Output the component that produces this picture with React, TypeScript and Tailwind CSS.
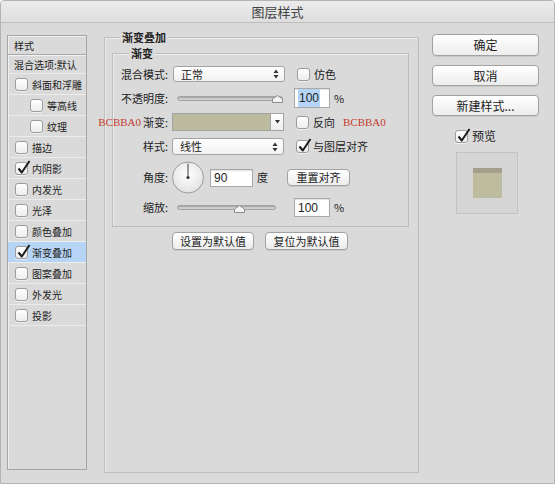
import type { ReactNode } from "react";

const cjk = { fontFamily: '"Noto Sans CJK SC", "Noto Sans", sans-serif' };
const serif = { fontFamily: '"Liberation Serif", serif' };

const layerStyles = [
  { label: "斜面和浮雕" },
  { label: "等高线", indent: true },
  { label: "纹理", indent: true },
  { label: "描边" },
  { label: "内阴影", checked: true },
  { label: "内发光" },
  { label: "光泽" },
  { label: "颜色叠加" },
  { label: "渐变叠加", checked: true, active: true },
  { label: "图案叠加" },
  { label: "外发光" },
  { label: "投影" },
];

function Checkbox({ checked = false }: { checked?: boolean }) {
  return (
    <span className="relative inline-block w-[13px] h-[13px] shrink-0 rounded-[3px] border border-[#9c9c9c] bg-gradient-to-b from-white to-[#ededed] shadow-[0_1px_0_rgba(255,255,255,0.6)]">
      {checked && (
        <svg
          className="absolute left-[1px] top-[-3px]"
          width="14"
          height="15"
          viewBox="0 0 14 15"
        >
          <path
            d="M1.5 8.5 L4.8 12.5 L12.5 1"
            fill="none"
            stroke="#1c1c1c"
            strokeWidth="2"
            strokeLinejoin="round"
          />
        </svg>
      )}
    </span>
  );
}

function UpDown() {
  return (
    <svg width="6" height="10" viewBox="0 0 6 10">
      <path d="M3 0.5 L5.5 4 H0.5 Z" fill="#333" />
      <path d="M3 9.5 L5.5 6 H0.5 Z" fill="#333" />
    </svg>
  );
}

function Select({ value, h }: { value: string; h: string }) {
  return (
    <div
      className={`w-[112px] ${h} flex items-center justify-between pl-[7px] pr-[5px] rounded-[3px] border border-[#a3a3a3] bg-gradient-to-b from-white to-[#f1f1f1] text-[11px] text-[#222]`}
    >
      <span>{value}</span>
      <UpDown />
    </div>
  );
}

function Slider({ width, thumb }: { width: string; thumb: string }) {
  return (
    <div className={`relative ${width} h-[12px] flex items-center`}>
      <div className="w-full h-[5px] rounded-full border border-[#a2a2a2] bg-[#cfcfcf] shadow-[inset_0_1px_1px_rgba(0,0,0,0.2)]" />
      <svg
        className={`absolute top-[3px] ${thumb}`}
        width="11"
        height="8"
        viewBox="0 0 11 8"
      >
        <path
          d="M5.5 0.5 L10.5 4 V7.5 H0.5 V4 Z"
          fill="#f4f4f4"
          stroke="#8c8c8c"
        />
      </svg>
    </div>
  );
}

function Field({ children, w, h }: { children: ReactNode; w: string; h: string }) {
  return (
    <div
      className={`${w} ${h} flex items-center pl-[3px] border border-[#a8a8a8] bg-white text-[12px] text-[#222] shadow-[inset_0_1px_1px_rgba(0,0,0,0.12)]`}
      style={{ fontFamily: '"Liberation Sans", Arial, sans-serif' }}
    >
      {children}
    </div>
  );
}

function PushButton({
  children,
  className = "",
}: {
  children: ReactNode;
  className?: string;
}) {
  return (
    <div
      className={`flex items-center justify-center rounded-[4px] border border-[#a2a2a2] bg-gradient-to-b from-white to-[#ececec] text-[11px] text-[#222] shadow-[0_1px_0_rgba(0,0,0,0.08)] ${className}`}
    >
      {children}
    </div>
  );
}

function Label({ children }: { children: ReactNode }) {
  return (
    <div className="relative w-[56px] shrink-0 text-right text-[11px] text-[#222] pr-[1px] whitespace-nowrap">
      {children}
    </div>
  );
}

function Dial() {
  return (
    <svg width="32" height="33" viewBox="0 0 32 33">
      <defs>
        <radialGradient id="dialBg" cx="50%" cy="40%" r="60%">
          <stop offset="0%" stopColor="#ffffff" />
          <stop offset="100%" stopColor="#e2e2e2" />
        </radialGradient>
      </defs>
      <circle cx="16" cy="16.5" r="15.5" fill="url(#dialBg)" stroke="#9a9a9a" />
      <line x1="16" y1="16.5" x2="16" y2="2.5" stroke="#3a3a3a" strokeWidth="1" />
      <circle cx="16" cy="16.5" r="1.6" fill="#3a3a3a" />
    </svg>
  );
}

export default function App() {
  return (
    <div
      className="w-[555px] h-[484px] overflow-hidden bg-[#dadada] border border-[#b4b4b4] rounded-t-[4px] flex flex-col"
      style={cjk}
    >
      {/* title bar */}
      <div className="h-[22px] shrink-0 flex items-center justify-center bg-gradient-to-b from-[#ececec] to-[#dedede] border-b border-[#bdbdbd] text-[13px] text-[#444]">
        图层样式
      </div>

      <div className="flex items-start">
        {/* left list */}
        <div className="ml-[6px] mt-[12px] w-[80px] h-[435px] border border-[#a6a6a6] shadow-[inset_1px_1px_0_#efefef] text-[10px] text-[#222] whitespace-nowrap">
          <div className="h-[19px] flex items-center pl-[6px] border-b border-[#a9a9a9]">
            样式
          </div>
          <div className="h-[19px] flex items-center pl-[6px] border-t border-[#f2f2f2] border-b border-b-[#ececec]">
            混合选项:默认
          </div>
          {layerStyles.map((item) => (
            <div
              key={item.label}
              className={`h-[21px] flex items-center gap-[4px] border-b border-[#ececec] ${
                item.indent ? "pl-[22px]" : "pl-[7px]"
              } ${item.active ? "bg-[#b6d5f6]" : ""}`}
            >
              <Checkbox checked={item.checked} />
              <span>{item.label}</span>
            </div>
          ))}
        </div>

        {/* middle group */}
        <div className="relative ml-[17px] mt-[14px] w-[315px] h-[436px] border border-[#bdbdbd] shadow-[inset_1px_1px_0_#ececec]">
          <span className="absolute left-[15px] top-[-8px] px-[2px] bg-[#dadada] text-[11px] text-[#222] font-bold leading-[14px]">
            渐变叠加
          </span>

          <div className="relative mt-[15px] ml-[7px] mr-[9px] h-[174px] border border-[#bdbdbd] shadow-[inset_1px_1px_0_#ececec] flex flex-col pt-[12px]">
            <span className="absolute left-[16px] top-[-8px] px-[2px] bg-[#dadada] text-[11px] text-[#222] font-bold leading-[14px]">
              渐变
            </span>

            {/* 混合模式 */}
            <div className="flex items-center h-[16px]">
              <Label>混合模式:</Label>
              <div className="ml-[4px]">
                <Select value="正常" h="h-[16px]" />
              </div>
              <div className="ml-[12px] flex items-center gap-[4px] text-[11px] text-[#222]">
                <Checkbox />
                <span>仿色</span>
              </div>
            </div>

            {/* 不透明度 */}
            <div className="mt-[6px] flex items-center h-[20px]">
              <Label>不透明度:</Label>
              <div className="ml-[8px]">
                <Slider width="w-[106px]" thumb="right-[0px]" />
              </div>
              <div className="ml-[11px] flex items-center gap-[4px] text-[11px] text-[#222]">
                <Field w="w-[36px]" h="h-[20px]">
                  <span className="bg-[#b6d5f6] px-[1px]">100</span>
                </Field>
                <span>%</span>
              </div>
            </div>

            {/* 渐变 */}
            <div className="mt-[5px] flex items-center h-[18px]">
              <Label>
                <span
                  className="absolute right-[28px] top-[0px] text-[11px] text-[#c43a2e] whitespace-nowrap"
                  style={serif}
                >
                  BCBBA0
                </span>
                渐变:
              </Label>
              <div className="ml-[3px] w-[112px] h-[18px] flex border border-[#a3a3a3]">
                <div className="flex-1 bg-[#bdbb9f]" />
                <div className="w-[13px] flex items-center justify-center border-l border-[#a3a3a3] bg-gradient-to-b from-white to-[#eeeeee]">
                  <svg width="5" height="4" viewBox="0 0 5 4">
                    <path d="M0 0 H5 L2.5 3.5 Z" fill="#333" />
                  </svg>
                </div>
              </div>
              <div className="ml-[12px] flex items-center gap-[4px] text-[11px] text-[#222]">
                <Checkbox />
                <span>反向</span>
                <span className="ml-[4px] text-[11px] text-[#c43a2e]" style={serif}>
                  BCBBA0
                </span>
              </div>
            </div>

            {/* 样式 */}
            <div className="mt-[7px] flex items-center h-[17px]">
              <Label>样式:</Label>
              <div className="ml-[3px]">
                <Select value="线性" h="h-[17px]" />
              </div>
              <div className="ml-[12px] flex items-center gap-[4px] text-[11px] text-[#222]">
                <Checkbox checked />
                <span>与图层对齐</span>
              </div>
            </div>

            {/* 角度 */}
            <div className="mt-[6px] flex items-center h-[33px]">
              <Label>角度:</Label>
              <div className="ml-[3px]">
                <Dial />
              </div>
              <div className="ml-[6px]">
                <Field w="w-[43px]" h="h-[18px]">
                  90
                </Field>
              </div>
              <span className="ml-[4px] text-[11px] text-[#222]">度</span>
              <PushButton className="ml-[19px] w-[63px] h-[17px]">重置对齐</PushButton>
            </div>

            {/* 缩放 */}
            <div className="mt-[4px] flex items-center h-[19px]">
              <Label>缩放:</Label>
              <div className="ml-[8px]">
                <Slider width="w-[99px]" thumb="left-[57px]" />
              </div>
              <div className="ml-[18px] flex items-center gap-[4px] text-[11px] text-[#222]">
                <Field w="w-[36px]" h="h-[19px]">
                  100
                </Field>
                <span>%</span>
              </div>
            </div>
          </div>

          <div className="mt-[5px] flex gap-[11px] pl-[67px]">
            <PushButton className="w-[82px] h-[18px]">设置为默认值</PushButton>
            <PushButton className="w-[83px] h-[18px]">复位为默认值</PushButton>
          </div>
        </div>

        {/* right column */}
        <div className="ml-[13px] mt-[11px] w-[107px] flex flex-col items-start text-[12px]">
          <PushButton className="w-full h-[22px] border-[#6f6f6f] text-[12px]">确定</PushButton>
          <PushButton className="mt-[9px] w-full h-[21px] text-[12px]">取消</PushButton>
          <PushButton className="mt-[9px] w-full h-[21px] text-[12px]">新建样式...</PushButton>
          <div className="ml-[23px] mt-[11px] flex items-center gap-[4px] text-[12px] text-[#222]">
            <Checkbox checked />
            <span>预览</span>
          </div>
          <div className="ml-[24px] mt-[7px] w-[62px] h-[62px] border border-[#c2c2c2] bg-[#d5d5d5] flex items-center justify-center">
            <div className="w-[29px] h-[30px] flex flex-col">
              <div className="h-[5px] bg-[#a59f8c]" />
              <div className="flex-1 bg-[#bebc9f]" />
            </div>
          </div>
        </div>
      </div>
    </div>
  );
}
